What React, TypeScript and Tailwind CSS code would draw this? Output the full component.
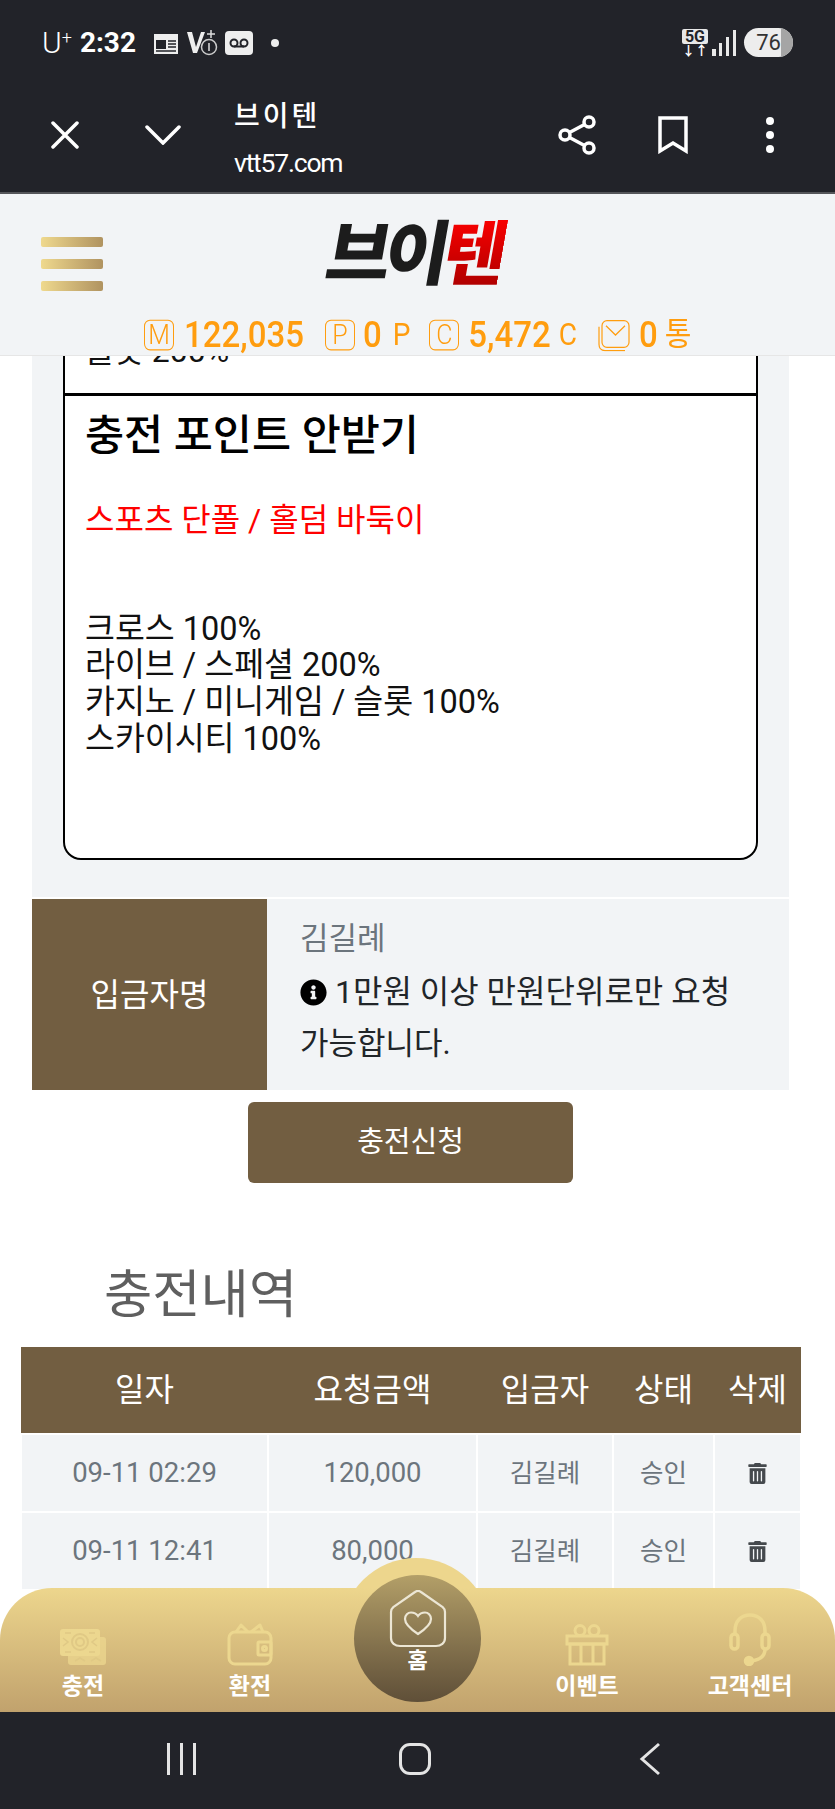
import { FaInfoCircle, FaTrashAlt } from "react-icons/fa";

const rows = [
  ["09-11 02:29", "120,000", "김길례", "승인"],
  ["09-11 12:41", "80,000", "김길례", "승인"],
];

function StatBox({ letter }: { letter: string }) {
  return (
    <span className="flex h-[28px] w-[30px] items-center justify-center rounded-[6px] border border-[#ff9d0f] text-[25px] font-light leading-none text-[#ff9d0f]">
      {letter}
    </span>
  );
}

function MoneyIcon() {
  return (
    <svg width="48" height="38" viewBox="0 0 48 38" fill="none" className="text-[#ecd78f]">
      <rect x="9" y="9" width="38" height="28" rx="3" fill="currentColor" opacity="0.75" />
      <rect x="1" y="1" width="40" height="27" rx="3" fill="currentColor" />
      <circle cx="21" cy="14" r="8" stroke="#e0c985" strokeWidth="2" />
      <circle cx="21" cy="14" r="4" stroke="#e0c985" strokeWidth="2" />
      <path d="M4 10l5 4-5 4M38 10l-5 4 5 4M6 5h6M30 5h6M6 24h6M30 24h6M16 33l5-3 5 3M32 33l5-3 5 3" stroke="#e0c985" strokeWidth="1.6" />
    </svg>
  );
}

function WalletIcon() {
  return (
    <svg width="46" height="44" viewBox="0 0 46 44" fill="none" stroke="#ecd78f" strokeWidth="3">
      <rect x="2" y="10" width="42" height="32" rx="6" />
      <path d="M9 10l5-7 7 7M24 10l9-7 3 7" strokeLinejoin="round" />
      <rect x="31" y="20" width="13" height="13" rx="1" />
      <circle cx="37.5" cy="26.5" r="2" />
    </svg>
  );
}

function GiftIcon() {
  return (
    <svg width="44" height="42" viewBox="0 0 44 42" fill="none" stroke="#ecd78f" strokeWidth="3">
      <rect x="2" y="12" width="40" height="8" />
      <rect x="5" y="20" width="34" height="20" />
      <path d="M16 20v20M28 20v20" />
      <ellipse cx="15" cy="6.5" rx="5" ry="5" />
      <ellipse cx="29" cy="6.5" rx="5" ry="5" />
    </svg>
  );
}

function HeadsetIcon() {
  return (
    <svg width="42" height="54" viewBox="0 0 42 54" fill="none" stroke="#ecd78f" strokeWidth="3.5">
      <path d="M6 22V19C6 9 12 3 21 3s15 6 15 16v3" />
      <rect x="2" y="22" width="7" height="15" rx="3.5" />
      <rect x="33" y="22" width="7" height="15" rx="3.5" />
      <path d="M36 37c0 7-5 11-14 12" />
      <circle cx="20" cy="49" r="3.5" fill="#ecd78f" />
    </svg>
  );
}

function HomeIcon() {
  return (
    <svg width="58" height="58" viewBox="0 0 58 58" fill="none" stroke="#ece6d4" strokeWidth="2.2">
      <path d="M2 22c0-2 .8-3.5 2.3-4.8L26 2a5 5 0 0 1 6 0l21.700 15.200C55.200 18.500 56 20 56 22v26c0 5-4 8-9 8H11c-5 0-9-3-9-8z" />
      <path d="M29 44C20 38 16 33 16 29c0-4 3-6.500 6-6.500 2.500 0 5.500 1.300 7 3.500 1.500-2.200 4.500-3.500 7-3.500 3 0 6 2.500 6 6.500 0 4-4 9-13 15z" />
    </svg>
  );
}

function NavItem({ icon, label }: { icon: React.ReactNode; label: string }) {
  return (
    <div className="flex flex-col items-center">
      <div className="flex h-[54px] items-end justify-center">{icon}</div>
      <span className="mt-[6px] text-[23px] font-bold leading-[30px] text-white">{label}</span>
    </div>
  );
}

export default function App() {
  return (
    <div className="relative flex h-[1809px] w-[835px] flex-col overflow-hidden bg-white font-[Roboto,'Noto_Sans_CJK_KR',sans-serif]">
      {/* 폰 상단 바 */}
      <div className="h-[194px] shrink-0 border-b-2 border-[#55565a] bg-[#222329] text-white">
        <div className="flex h-[85px] items-center justify-between pl-[42px] pr-[42px]">
          <div className="flex items-center">
            <span className="text-[30px] font-light leading-none">U<sup className="text-[18px]">+</sup></span>
            <span className="ml-[8px] text-[28px] font-bold leading-none">2:32</span>
            <svg width="26" height="24" viewBox="0 0 26 24" className="ml-[17px]" fill="none">
              <rect x="1" y="3" width="24" height="20" fill="#eee" />
              <rect x="3" y="9" width="10" height="9" fill="#222329" />
              <path d="M15 10h8M15 13h8M15 16h8M3 20h20" stroke="#222329" strokeWidth="1.500" />
            </svg>
            <svg width="32" height="28" viewBox="0 0 32 28" className="ml-[7px]" fill="none">
              <path d="M1 3h5l4 15L15 3h4l-8 21H7z" fill="#eee" />
              <circle cx="23" cy="18" r="7.500" stroke="#ccc" strokeWidth="1.500" />
              <path d="M23 14v8M25 1v8M21 5h8" stroke="#ddd" strokeWidth="1.500" />
            </svg>
            <svg width="28" height="24" viewBox="0 0 28 24" className="ml-[7px]" fill="none">
              <rect width="28" height="24" rx="4" fill="#eee" />
              <circle cx="9" cy="12" r="3.500" stroke="#222329" strokeWidth="2" />
              <circle cx="19" cy="12" r="3.500" stroke="#222329" strokeWidth="2" />
              <path d="M9 15.500h10" stroke="#222329" strokeWidth="2" />
            </svg>
            <span className="ml-[18px] h-[8px] w-[8px] rounded-full bg-[#eee]" />
          </div>
          <div className="flex items-center">
            <div className="flex flex-col items-center">
              <span className="rounded-[2px] bg-[#e8e8e8] px-[3px] text-[16px] font-bold leading-[15px] text-[#222329]">5G</span>
              <span className="text-[13px] font-bold leading-[13px]">↓↑</span>
            </div>
            <svg width="24" height="28" viewBox="0 0 24 28" className="ml-[4px]" fill="#e8e8e8">
              <rect x="0" y="20" width="4" height="7" />
              <rect x="7" y="14" width="3" height="13" />
              <rect x="14" y="8" width="3" height="19" />
              <rect x="21" y="1" width="3" height="26" />
            </svg>
            <div className="relative ml-[8px] flex h-[29px] w-[49px] items-center justify-center overflow-hidden rounded-full bg-[#ededed] text-[22px] leading-none text-[#333]">
              <span className="absolute right-0 top-0 h-full w-[12px] bg-[#a5a5a5]" />
              <span className="relative">76</span>
            </div>
          </div>
        </div>
        <div className="flex h-[107px] items-center pb-[8px]">
          <svg width="28" height="28" viewBox="0 0 28 28" className="ml-[51px]" stroke="#fff" strokeWidth="3.500" strokeLinecap="round">
            <path d="M2 2l24 24M26 2L2 26" />
          </svg>
          <svg width="36" height="20" viewBox="0 0 36 20" fill="none" className="ml-[66px]" stroke="#fff" strokeWidth="3.500" strokeLinecap="round">
            <path d="M2 2l16 16L34 2" />
          </svg>
          <div className="ml-[53px] flex flex-col pt-[7px]">
            <span className="text-[28px] font-medium leading-[36px] tracking-[3px]">브이텐</span>
            <span className="mt-[13px] text-[26.5px] leading-[30px] tracking-[-1.200px]">vtt57.com</span>
          </div>
          <svg width="38" height="40" viewBox="0 0 38 40" fill="none" className="ml-[216px]" stroke="#fff" strokeWidth="3.500">
            <circle cx="7" cy="20" r="5" />
            <circle cx="31" cy="7" r="5" />
            <circle cx="31" cy="33" r="5" />
            <path d="M11.500 17.500l15-8M11.500 22.500l15 8" />
          </svg>
          <svg width="30" height="38" viewBox="0 0 30 38" fill="none" className="ml-[62px]" stroke="#fff" strokeWidth="3.500">
            <path d="M2 2h26v33l-13-8-13 8z" />
          </svg>
          <div className="ml-[78px] flex flex-col gap-[6px]">
            <span className="h-[8px] w-[8px] rounded-full bg-white" />
            <span className="h-[8px] w-[8px] rounded-full bg-white" />
            <span className="h-[8px] w-[8px] rounded-full bg-white" />
          </div>
        </div>
      </div>

      {/* 사이트 헤더 */}
      <header className="relative z-10 h-[162px] shrink-0 border-b border-[#e6e6e6] bg-[#f2f4f6]">
        <div className="relative flex h-[124px] items-center justify-center pb-[3px]">
          <div className="absolute left-[41px] top-[43px] flex flex-col gap-[12px]">
            <span className="h-[10px] w-[62px] rounded-[2px] bg-gradient-to-r from-[#efd98e] to-[#b09360]" />
            <span className="h-[10px] w-[62px] rounded-[2px] bg-gradient-to-r from-[#efd98e] to-[#b09360]" />
            <span className="h-[10px] w-[62px] rounded-[2px] bg-gradient-to-r from-[#efd98e] to-[#b09360]" />
          </div>
          <div className="-skew-x-[10deg] pr-[6px] text-[70px] font-black leading-none tracking-[-6px] text-[#1c1c1c]">
            브이<span className="bg-gradient-to-b from-[#ff0000] to-[#a50000] bg-clip-text text-transparent">텐</span>
          </div>
        </div>
        <div className="flex origin-center scale-y-110 items-center pl-[144px] text-[33px] font-medium leading-none text-[#ff9d0f]">
          <StatBox letter="M" />
          <span className="ml-[10px]">122,035</span>
          <span className="ml-[21px]"><StatBox letter="P" /></span>
          <span className="ml-[8px]">0</span>
          <span className="ml-[11px] text-[28px] font-normal">P</span>
          <span className="ml-[19px]"><StatBox letter="C" /></span>
          <span className="ml-[9px]">5,472</span>
          <span className="ml-[8px] text-[28px] font-normal">C</span>
          <svg width="32" height="30" viewBox="0 0 32 32" fill="none" className="ml-[21px]" stroke="#ff9d0f" strokeWidth="1.200" preserveAspectRatio="none">
            <path d="M1 8v17c0 4 2 6 6 6h20" />
            <rect x="4" y="2" width="27" height="26" rx="5" />
            <path d="M8 7l9.500 9L27 7" />
          </svg>
          <span className="ml-[9px]">0</span>
          <span className="ml-[7px] text-[29px] font-normal">통</span>
        </div>
      </header>

      {/* 본문 */}
      <main className="min-h-0 flex-1 overflow-hidden bg-white">
        <div className="ml-[32px] flex w-[757px] flex-col bg-[#f2f4f6]">
          <div className="mx-[31px]">
            <div className="h-[37px] overflow-hidden border-x-2 border-black bg-white pl-[20px]">
              <div className="-mt-[23px] text-[32px] leading-[36.700px] text-[#111]">슬롯 200%</div>
            </div>
            <div className="h-[467px] rounded-b-[18px] border-x-2 border-b-2 border-t-[3px] border-black bg-white pl-[20px] text-black">
              <div className="mt-[17px] text-[42.5px] font-medium leading-[46px]">충전 포인트 안받기</div>
              <div className="mt-[43px] text-[32px] leading-[36.700px] text-[#ff0000]">스포츠 단폴 / 홀덤 바둑이</div>
              <div className="mt-[72px] text-[32.5px] leading-[36.700px] text-[#111]">
                <div>크로스 100%</div>
                <div>라이브 / 스페셜 200%</div>
                <div>카지노 / 미니게임 / 슬롯 100%</div>
                <div>스카이시티 100%</div>
              </div>
            </div>
          </div>
          <div className="mt-[37px] flex h-[193px] border-t-2 border-white">
            <div className="flex w-[235px] items-center justify-center bg-[#725e41] text-[32px] text-white">입금자명</div>
            <div className="flex-1 pl-[33px] pt-[14px] text-[31px] leading-[51px] text-[#212529]">
              <div className="text-[#6c757d]">김길례</div>
              <div className="mt-[3px] flex items-center text-[32px]">
                <FaInfoCircle className="mr-[8px] text-[27px] text-black" />
                1만원 이상 만원단위로만 요청
              </div>
              <div>가능합니다.</div>
            </div>
          </div>
        </div>

        <button className="ml-[248px] mt-[12px] flex h-[81px] w-[325px] items-center justify-center rounded-[6px] bg-[#725e41] text-[29px] text-white">
          충전신청
        </button>

        <h2 className="ml-[104px] mt-[82px] text-[52.5px] font-normal leading-[60px] text-[#5f5f5f]">충전내역</h2>

        <table className="ml-[20px] mt-[22px] w-[780px] table-fixed border-collapse">
          <thead>
            <tr className="h-[87px] bg-[#725e41] text-[32px] text-white">
              <th className="w-[247px] font-normal">일자</th>
              <th className="w-[209px] font-normal">요청금액</th>
              <th className="w-[136px] font-normal">입금자</th>
              <th className="w-[101px] font-normal">상태</th>
              <th className="w-[87px] font-normal">삭제</th>
            </tr>
          </thead>
          <tbody>
            {rows.map((r) => (
              <tr key={r[0]} className="h-[78px] bg-[#f2f4f6] text-center text-[27.5px] text-[#6c757d]">
                <td className="border-2 border-white">{r[0]}</td>
                <td className="border-2 border-white">{r[1]}</td>
                <td className="border-2 border-white text-[25.5px]">{r[2]}</td>
                <td className="border-2 border-white text-[25.5px]">{r[3]}</td>
                <td className="border-2 border-white">
                  <FaTrashAlt className="mx-auto text-[21px] text-[#45494d]" />
                </td>
              </tr>
            ))}
          </tbody>
        </table>
      </main>

      {/* 하단 메뉴 */}
      <div className="absolute bottom-[97px] left-0 z-10 h-[124px] w-full">
        <div className="absolute left-[341px] top-[-30px] h-[150px] w-[150px] rounded-full bg-[#edd68d]" />
        <div className="absolute inset-0 grid grid-cols-[166px_168px_164px_178px_148px] rounded-t-[52px] bg-gradient-to-b from-[#edd68d] to-[#c1a26d] pt-[24px]">
          <NavItem icon={<MoneyIcon />} label="충전" />
          <NavItem icon={<WalletIcon />} label="환전" />
          <div />
          <NavItem icon={<GiftIcon />} label="이벤트" />
          <NavItem icon={<HeadsetIcon />} label="고객센터" />
        </div>
        <div className="absolute left-[354px] top-[-13px] flex h-[127px] w-[127px] flex-col items-center rounded-full bg-gradient-to-b from-[#b39f68] to-[#5f4f38] pt-[15px]">
          <HomeIcon />
          <span className="text-[22px] font-bold leading-[26px] text-white">홈</span>
        </div>
      </div>
      <div className="relative z-10 flex h-[97px] shrink-0 items-center bg-[#222329] pb-[3px]">
        <div className="ml-[167px] flex gap-[10px]">
          <span className="h-[32px] w-[3px] bg-[#e4e4e4]" />
          <span className="h-[32px] w-[3px] bg-[#e4e4e4]" />
          <span className="h-[32px] w-[3px] bg-[#e4e4e4]" />
        </div>
        <span className="ml-[203px] h-[32px] w-[32px] rounded-[11px] border-[3px] border-[#e4e4e4]" />
        <svg width="22" height="34" viewBox="0 0 22 34" fill="none" className="ml-[208px]" stroke="#e4e4e4" strokeWidth="3">
          <path d="M20 2L3 17l17 15" />
        </svg>
      </div>
    </div>
  );
}
